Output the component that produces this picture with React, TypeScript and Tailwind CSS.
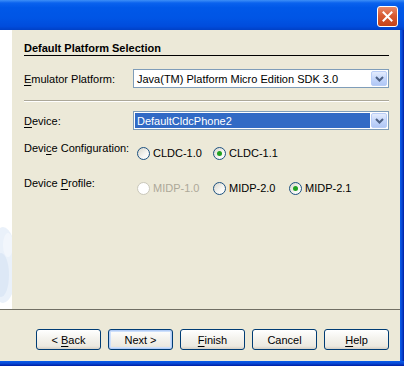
import React from "react";

const font = "font-['Tahoma','Liberation_Sans',Arial,sans-serif] text-[11px] leading-[14px]";

function U({ children }: { children: React.ReactNode }) {
  return <span className="underline underline-offset-[2px]">{children}</span>;
}

function DropButton() {
  return (
    <div className="w-[16px] h-[15px] rounded-[2px] border border-[#b9cdf7] bg-[linear-gradient(180deg,#e4ecfd_0%,#c5d7fb_50%,#b1c7f5_100%)] flex items-center justify-center">
      <svg width="9" height="6" viewBox="0 0 9 6">
        <path d="M1 1 L4.5 4.5 L8 1" fill="none" stroke="#4d6185" strokeWidth="2" />
      </svg>
    </div>
  );
}

function Combo({ value, selected }: { value: string; selected?: boolean }) {
  return (
    <div className="flex-1 h-[19px] border border-[#7f9db9] bg-white flex items-center pl-[1px] pr-[1px]">
      <div
        className={
          "flex-1 h-[15px] flex items-center pl-[2px] mr-[1px] " +
          (selected ? "bg-[#316ac5] text-white" : "text-black")
        }
      >
        {value}
      </div>
      <DropButton />
    </div>
  );
}

function Radio({ label, checked, disabled }: { label: string; checked?: boolean; disabled?: boolean }) {
  return (
    <div className="flex items-center w-[76px] h-[14px]">
      <span
        className={
          "w-[13px] h-[13px] rounded-full border flex items-center justify-center " +
          (disabled
            ? "border-[#cac8bb] bg-white"
            : "border-[#1c5180] bg-[linear-gradient(135deg,#d8d6cb_0%,#f6f6f3_60%,#ffffff_100%)]")
        }
      >
        {checked && <span className="w-[5px] h-[5px] rounded-full bg-[#21a121]" />}
      </span>
      <span className={"ml-[3px] " + (disabled ? "text-[#aca899]" : "text-black")}>{label}</span>
    </div>
  );
}

function XpButton({ children, isDefault }: { children: React.ReactNode; isDefault?: boolean }) {
  return (
    <div
      className={
        "w-[65px] h-[21px] rounded-[3px] border border-[#003c74] flex items-center justify-center whitespace-pre bg-[linear-gradient(180deg,#ffffff_0%,#f5f4ef_40%,#ece9e0_85%,#d6d0c5_100%)] " +
        (isDefault ? "shadow-[inset_0_0_0_1px_#b4cdf5,inset_0_0_0_2px_#cee0fb]" : "")
      }
    >
      {children}
    </div>
  );
}

export default function App() {
  return (
    <div className={"w-[404px] h-[366px] flex flex-col overflow-hidden bg-[#ece9d8] text-black " + font}>
      {/* title bar */}
      <div className="h-[30px] flex justify-end items-start pt-[6px] pr-[6px] bg-[linear-gradient(180deg,#3d8ff7_0%,#0a62ee_10%,#0058e8_25%,#0055e5_60%,#004cdc_88%,#0040c6_100%)]">
        <div className="w-[21px] h-[21px] rounded-[3px] border border-white bg-[linear-gradient(180deg,#e98a6a_0%,#d85b33_45%,#c44218_100%)] flex items-center justify-center">
          <svg width="11" height="11" viewBox="0 0 11 11">
            <path d="M1.5 1.5 L9.5 9.5 M9.5 1.5 L1.5 9.5" stroke="#ffffff" strokeWidth="2" strokeLinecap="square" />
          </svg>
        </div>
      </div>

      <div className="flex-1 flex">
        <div className="flex-1 flex flex-col">
          {/* body */}
          <div className="h-[279px] flex">
            <div className="w-[12px] bg-white">
              <svg width="12" height="279" viewBox="0 0 12 279">
                <ellipse cx="3" cy="235" rx="14" ry="38" fill="#eaf1fa" />
                <ellipse cx="1" cy="245" rx="8" ry="22" fill="#dde8f6" />
                <ellipse cx="8" cy="215" rx="5" ry="12" fill="#f2f6fc" />
              </svg>
            </div>
            <div className="flex-1 flex flex-col pl-[12px] pr-[11px]">
              <div className="mt-[11px] h-[15px] font-bold border-b border-black">Default Platform Selection</div>

              <div className="mt-[13px] flex items-center">
                <div className="w-[109px]">
                  <U>E</U>mulator Platform:
                </div>
                <Combo value="Java(TM) Platform Micro Edition SDK 3.0" />
              </div>

              <div className="mt-[12px] h-[2px] border-t border-[#aca899] border-b border-b-white" />

              <div className="mt-[9px] flex items-center">
                <div className="w-[109px]">
                  <U>D</U>evice:
                </div>
                <Combo value="DefaultCldcPhone2" selected />
              </div>

              <div className="mt-[11px] flex items-start">
                <div className="w-[109px]">
                  Devi<U>c</U>e Configuration:
                </div>
                <div className="flex pl-[4px] mt-[5px]">
                  <Radio label="CLDC-1.0" />
                  <Radio label="CLDC-1.1" checked />
                </div>
              </div>

              <div className="mt-[16px] flex items-start">
                <div className="w-[109px]">
                  Device <U>P</U>rofile:
                </div>
                <div className="flex pl-[4px] mt-[5px]">
                  <Radio label="MIDP-1.0" disabled />
                  <Radio label="MIDP-2.0" />
                  <Radio label="MIDP-2.1" checked />
                </div>
              </div>
            </div>
          </div>

          <div className="h-[1px] bg-[#716f64]" />

          {/* button bar */}
          <div className="flex-1 flex gap-[7px] pl-[36px] pt-[19px]">
            <XpButton>
              {"< "}
              <U>B</U>
              {"ack"}
            </XpButton>
            <XpButton isDefault>{"Next >"}</XpButton>
            <XpButton>
              <U>F</U>inish
            </XpButton>
            <XpButton>Cancel</XpButton>
            <XpButton>
              <U>H</U>elp
            </XpButton>
          </div>
        </div>
        <div className="w-[4px] bg-[linear-gradient(90deg,#0a5eea_0%,#0847d4_50%,#001ea0_100%)]" />
      </div>

      <div className="h-[5px] bg-[linear-gradient(180deg,#0a5eea_0%,#0847d4_50%,#001ea0_100%)]" />
    </div>
  );
}
